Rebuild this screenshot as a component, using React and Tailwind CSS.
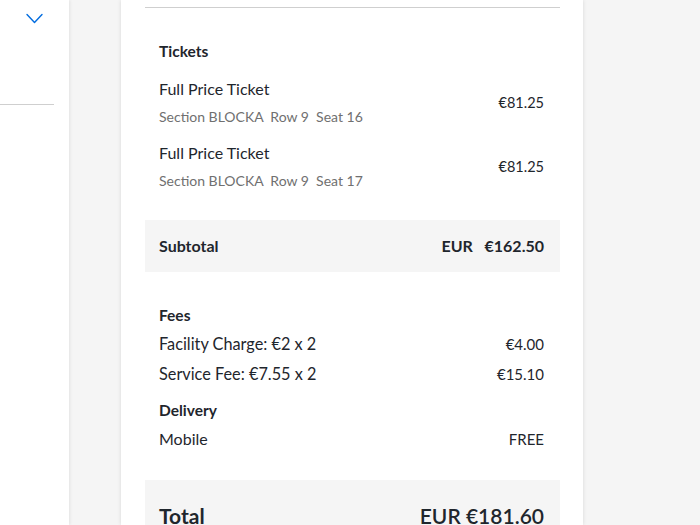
import React from 'react';

const tickets = [
  { name: 'Full Price Ticket', seat: '16', price: '€81.25' },
  { name: 'Full Price Ticket', seat: '17', price: '€81.25' },
];

const fees = [
  { label: 'Facility Charge: €2 x 2', value: '€4.00' },
  { label: 'Service Fee: €7.55 x 2', value: '€15.10' },
];

const App = () => {
  return (
    <div className="flex h-[525px] w-[700px] overflow-hidden bg-[#f5f5f5] font-['Lato',sans-serif] text-[#1f262d]">
      <div className="w-[69px] shrink-0 bg-white shadow-[1px_0_3px_rgba(0,0,0,0.08)]">
        <div className="flex h-[36px] items-center pl-[26px]">
          <svg width="17" height="11" viewBox="0 0 17 11" fill="none">
            <path d="M1 1.5 L8.5 9.5 L16 1.5" stroke="#026cdf" strokeWidth="1.4" strokeLinecap="round" strokeLinejoin="round" />
          </svg>
        </div>
        <div className="mt-[68px] h-px w-[54px] bg-[#cfcfcf]" />
      </div>

      <div className="ml-[52px] w-[462px] shrink-0 bg-white pl-6 pr-[23px] shadow-[0_0_4px_rgba(0,0,0,0.12)]">
        <div className="mt-[7px] h-px bg-[#cfcfcf]" />

        <div className="pl-[14px] pr-4">
          <h3 className="mt-[33px] text-[15.5px] font-bold leading-5">Tickets</h3>
          {tickets.map((t, i) => (
            <div key={i} className={`flex items-center justify-between ${i === 0 ? 'mt-[18px]' : 'mt-[17px]'}`}>
              <div>
                <div className="text-[16px] leading-5">{t.name}</div>
                <div className="mt-[9px] text-[14px] leading-[18px] text-[#707070]">
                  Section BLOCKA&nbsp;&nbsp;Row 9&nbsp;&nbsp;Seat {t.seat}
                </div>
              </div>
              <div className="text-[14.5px] leading-5">{t.price}</div>
            </div>
          ))}
        </div>

        <div className="mt-[30px] flex h-[52px] items-center justify-between bg-[#f5f5f5] pl-[14px] pr-4 text-[16px] font-bold">
          <span>Subtotal</span>
          <span>EUR&nbsp;&nbsp;&nbsp;€162.50</span>
        </div>

        <div className="pl-[14px] pr-4">
          <h3 className="mt-[33px] text-[15.5px] font-bold leading-5">Fees</h3>
          {fees.map((f, i) => (
            <div key={i} className={`flex justify-between text-[16.3px] leading-5 ${i === 0 ? 'mt-[9px]' : 'mt-[10px]'}`}>
              <span>{f.label}</span>
              <span className="text-[15px]">{f.value}</span>
            </div>
          ))}
          <h3 className="mt-[16px] text-[15.5px] font-bold leading-5">Delivery</h3>
          <div className="mt-[9px] flex justify-between text-[16px] leading-5">
            <span>Mobile</span>
            <span className="text-[15px]">FREE</span>
          </div>
        </div>

        <div className="mt-[31px] flex h-[80px] items-start justify-between bg-[#f5f5f5] pl-[14px] pr-4 pt-[22px] text-[21px] font-bold leading-7">
          <span>Total</span>
          <span className="font-semibold">EUR&nbsp;€181.60</span>
        </div>
      </div>
    </div>
  );
};

export default App;
